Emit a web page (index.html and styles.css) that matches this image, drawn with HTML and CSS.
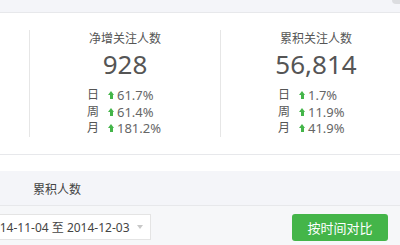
FILE: index.html
```html
<!DOCTYPE html>
<html lang="zh-CN">
<head>
  <meta charset="UTF-8">
  <meta name="viewport" content="width=device-width, initial-scale=1.0">
  <title>用户分析</title>
  <link rel="stylesheet" href="styles.css">
</head>
<body>
  <!-- top strip -->
  <div class="topbar">
    <div class="corner"></div>
  </div>

  <!-- key numbers -->
  <div class="stats">
    <div class="stats-gap"></div>
    <div class="stat">
      <p class="stat-title">净增关注人数</p>
      <p class="stat-num">928</p>
      <ul class="stat-list">
        <li><span class="label">日</span><span class="up"></span>61.7%</li>
        <li><span class="label">周</span><span class="up"></span>61.4%</li>
        <li><span class="label">月</span><span class="up"></span>181.2%</li>
      </ul>
    </div>
    <div class="stat">
      <p class="stat-title">累积关注人数</p>
      <p class="stat-num">56,814</p>
      <ul class="stat-list">
        <li><span class="label">日</span><span class="up"></span>1.7%</li>
        <li><span class="label">周</span><span class="up"></span>11.9%</li>
        <li><span class="label">月</span><span class="up"></span>41.9%</li>
      </ul>
    </div>
  </div>

  <div class="spacer"></div>

  <!-- tab header -->
  <div class="tabs">
    <span class="tab">累积人数</span>
  </div>

  <!-- filter bar -->
  <div class="toolbar">
    <div class="date-range">
      <span>2014-11-04 至 2014-12-03</span>
      <span class="caret"></span>
    </div>
    <button class="btn-green">按时间对比</button>
  </div>
</body>
</html>
```

FILE: styles.css
```css
* {
  margin: 0;
  padding: 0;
  box-sizing: border-box;
}

body {
  font-family: "Noto Sans", "Noto Sans CJK SC", sans-serif;
  background-color: #f6f7f9;
  color: #555;
  width: 400px;
  overflow: hidden;
}

.topbar {
  height: 13px;
  background-color: #f4f5f9;
  border-bottom: 1px solid #e7e8eb;
  display: flex;
  justify-content: flex-end;
}

.corner {
  width: 8px;
  height: 4px;
  background-color: #dcdde0;
  border-bottom-left-radius: 4px;
}

.stats {
  display: flex;
  background-color: #fff;
  padding: 17px 0 17px 0;
  border-bottom: 1px solid #e7e8eb;
}

.stats-gap {
  width: 29px;
  flex-shrink: 0;
}

.stat {
  width: 191px;
  flex-shrink: 0;
  border-left: 1px solid #e6e6e6;
  text-align: center;
  height: 107px;
}

.stat-title {
  font-size: 12px;
  line-height: 16px;
  margin-top: 1px;
  color: #555;
}

.stat-num {
  font-size: 26px;
  line-height: 34px;
  color: #555;
}

.stat-list {
  list-style: none;
  display: inline-block;
  width: 76px;
  text-align: left;
  margin-top: 6px;
  font-size: 13px;
  line-height: 16.5px;
  color: #666;
}

.stat-list li {
  display: flex;
  align-items: center;
  white-space: nowrap;
}

.label {
  width: 21px;
  font-size: 12px;
  color: #555;
}

/* small green up arrow */
.up {
  display: inline-block;
  position: relative;
  width: 7px;
  height: 8px;
  margin-right: 2px;
}

.up::before {
  content: "";
  position: absolute;
  left: 0;
  top: 0;
  border-left: 3.5px solid transparent;
  border-right: 3.5px solid transparent;
  border-bottom: 4px solid #44b549;
}

.up::after {
  content: "";
  position: absolute;
  left: 2px;
  top: 4px;
  width: 3px;
  height: 4px;
  background-color: #44b549;
}

.spacer {
  height: 16px;
  background-color: #fff;
}

.tabs {
  height: 35px;
  background-color: #f4f5f9;
  border-bottom: 1px solid #e7e8eb;
  padding-left: 33px;
  display: flex;
  align-items: center;
}

.tab {
  font-size: 12px;
  color: #444;
  padding-top: 2px;
}

.toolbar {
  display: flex;
  justify-content: space-between;
  align-items: flex-start;
  padding: 8px 12px 0 0;
  margin-left: -25px;
}

.date-range {
  width: 176px;
  height: 26px;
  background-color: #fff;
  border: 1px solid #e4e4e4;
  display: flex;
  align-items: center;
  padding-left: 10px;
  font-size: 12px;
  color: #444;
  white-space: nowrap;
}

.caret {
  margin-left: 7px;
  border-left: 3px solid transparent;
  border-right: 3px solid transparent;
  border-top: 4px solid #c8c8c8;
}

.btn-green {
  width: 96px;
  height: 27px;
  background-color: #44b549;
  color: #fff;
  border: none;
  border-radius: 3px;
  font-family: inherit;
  font-size: 13px;
  cursor: pointer;
}
```
